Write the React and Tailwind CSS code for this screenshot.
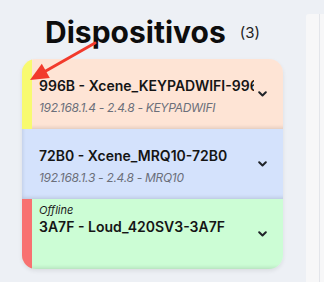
import React from "react";

const devices = [
  {
    title: "996B - Xcene_KEYPADWIFI-996B",
    sub: "192.168.1.4 - 2.4.8 - KEYPADWIFI",
    bg: "bg-[#fee4d5]",
    bar: "bg-[#f8fa70]",
  },
  {
    title: "72B0 - Xcene_MRQ10-72B0",
    sub: "192.168.1.3 - 2.4.8 - MRQ10",
    bg: "bg-[#d4e2fc]",
    bar: "bg-transparent",
  },
  {
    title: "3A7F - Loud_420SV3-3A7F",
    offline: true,
    bg: "bg-[#ccfdd5]",
    bar: "bg-[#f87171]",
  },
];

function Chevron() {
  return (
    <svg width="9" height="6" viewBox="0 0 9 6" className="shrink-0">
      <path d="M1.2 1.2 L4.5 4.5 L7.8 1.2" fill="none" stroke="#1f2328" strokeWidth="2" strokeLinecap="round" strokeLinejoin="round" />
    </svg>
  );
}

function DeviceRow({ d }) {
  return (
    <div className={`flex h-[70px] ${d.bg} shadow-[inset_2px_-3px_4px_-2px_rgba(0,0,0,0.14)]`}>
      <div className={`w-[10px] shrink-0 ${d.bar}`} />
      <div className="flex flex-1 items-center min-w-0 pl-[7px] pr-[16px]">
        <div className={`flex flex-col flex-1 min-w-0 self-start ${d.offline ? "pt-[5px]" : "pt-[17px]"}`}>
          {d.offline && (
            <div className="text-[11px] leading-[13px] italic text-[#1b1b1b]">Offline</div>
          )}
          <div className="text-[14px] leading-[20px] font-semibold text-[#151515] whitespace-nowrap overflow-hidden">
            {d.title}
          </div>
          {d.sub && (
            <div className="mt-[4px] text-[12px] leading-[16px] italic tracking-[-0.3px] text-[#6b6f7a] whitespace-nowrap">
              {d.sub}
            </div>
          )}
        </div>
        <div className="ml-[4px]">
          <Chevron />
        </div>
      </div>
    </div>
  );
}

export default function App() {
  return (
    <div
      className="relative flex w-full h-[282px] bg-[#edf0f5] overflow-hidden"
      style={{ fontFamily: "Inter, 'Noto Sans', sans-serif" }}
    >
      <div className="w-[306px] shrink-0 pl-[22px]">
        <div className="flex w-[261px] justify-center items-start pt-[16px] gap-[14px]">
          <h1 className="text-[30px] leading-[33px] font-bold text-[#0d0d0d]">Dispositivos</h1>
          <span className="mt-[8px] text-[15px] leading-[18px] text-[#222]">(3)</span>
        </div>
        <div className="mt-[10px] w-[261px] rounded-[14px] overflow-hidden shadow-[0_2px_4px_rgba(0,0,0,0.08)]">
          {devices.map((d) => (
            <DeviceRow key={d.title} d={d} />
          ))}
        </div>
      </div>
      <div className="flex-1 mt-[14px] bg-[#f7f7f8] rounded-tl-[3px]">
        <div className="w-[14px] h-full border-r border-[#e3e5ea]" />
      </div>
      <svg className="absolute left-0 top-0 pointer-events-none" width="324" height="282">
        <line x1="95" y1="43" x2="44" y2="72" stroke="#f23a2c" strokeWidth="3" strokeLinecap="round" />
        <polygon points="30,80 41.8,63.8 49.8,78" fill="#f23a2c" />
      </svg>
    </div>
  );
}
